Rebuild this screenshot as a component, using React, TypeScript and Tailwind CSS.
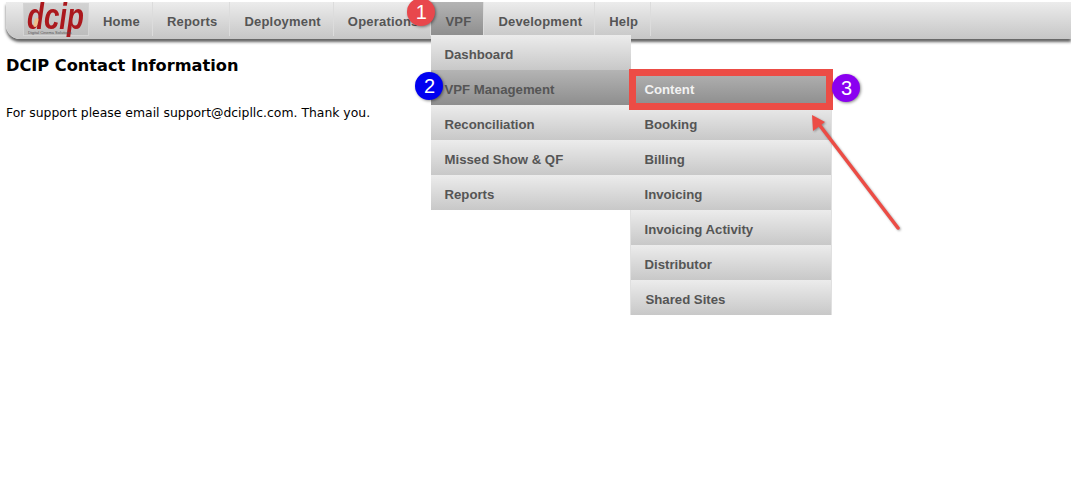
import React from 'react';

const navItems = ['Home', 'Reports', 'Deployment', 'Operations', 'VPF', 'Development', 'Help'];
const vpfMenu = ['Dashboard', 'VPF Management', 'Reconciliation', 'Missed Show & QF', 'Reports'];
const subMenu = ['Content', 'Booking', 'Billing', 'Invoicing', 'Invoicing Activity', 'Distributor', 'Shared Sites'];

const idle = 'bg-gradient-to-b from-[#ececec] to-[#c8c8c8] text-[#555]';
const hot = 'bg-gradient-to-b from-[#b4b4b4] to-[#8e8e8e]';

const Badge: React.FC<{ n: number; className: string }> = ({ n, className }) => (
  <div
    className={`absolute z-20 flex h-[28px] w-[28px] items-center justify-center rounded-full text-[20px] font-normal leading-none text-white shadow-[1px_1px_3px_rgba(0,0,0,0.45)] ${className}`}
  >
    {n}
  </div>
);

const SubMenu = () => (
  <div className="absolute left-full top-0 w-[200px] shadow-[1px_0_0_#e0e0e0,-1px_0_0_#e0e0e0]">
    {subMenu.map((label) => {
      const current = label === 'Content';
      return (
        <div
          key={label}
          className={`relative flex h-[35px] items-center pt-[5px] text-[13.2px] font-bold ${
            label === 'Shared Sites' ? 'pl-[14px]' : 'pl-[13px]'
          } ${current ? `${hot} text-[#f2f2f2]` : idle}`}
        >
          {label}
          {current && (
            <>
              <div className="absolute -bottom-[5px] -left-[2px] -right-[2px] -top-[1px] z-10 border-[7px] border-[#ec4c45]" />
              <Badge n={3} className="left-[201px] top-[4px] bg-[#8a00f0]" />
            </>
          )}
        </div>
      );
    })}
  </div>
);

const Dropdown = () => (
  <div className="absolute left-0 top-[33px] z-10 w-[200px] tracking-normal">
    {vpfMenu.map((label) => {
      const open = label === 'VPF Management';
      return (
        <div
          key={label}
          className={`relative flex h-[35px] items-center pl-[13px] pt-[5px] text-[13.2px] font-bold ${
            open ? `${hot} text-[#555]` : idle
          }`}
        >
          {label}
          {open && (
            <>
              <Badge n={2} className="-left-[16px] top-[2px] bg-[#0000f0]" />
              <SubMenu />
            </>
          )}
        </div>
      );
    })}
  </div>
);

const NavLink: React.FC<{ label: string }> = ({ label }) => {
  const active = label === 'VPF';
  return (
    <div
      className={`relative flex h-[34px] items-center border-r border-[#dcdcdc] pl-[14px] pr-[12px] pt-[6px] text-[13px] font-bold tracking-[0.2px] text-[#555] ${
        active ? hot : ''
      }`}
    >
      {label}
      {active && (
        <>
          <Badge n={1} className="-left-[24px] -top-[4px] bg-[#e8474c]" />
          <Dropdown />
        </>
      )}
    </div>
  );
};

export default function App() {
  return (
    <div className="relative h-[483px] w-full overflow-hidden bg-white font-['Liberation_Sans',Arial,sans-serif]">
      <div className="pt-[2px]">
        <nav className="ml-[6px] flex h-[37px] rounded-bl-[14px] bg-gradient-to-b from-[#ececec] to-[#c6c6c6] pl-[17px] shadow-[0_3px_3px_rgba(60,60,60,0.8)]">
          <div className="relative mt-[1px] h-[33px] w-[66px] border border-[#d4d4d4] bg-gradient-to-b from-[#d2d2d2] to-[#bdbdbd]">
            <span className="absolute left-[3px] top-[-7px] origin-left scale-x-[0.77] text-[36px] font-bold italic leading-[40px] text-[#ab181d]">
              dcip
            </span>
            <span className="absolute left-[10px] top-[14px] h-[9px] w-[4px] -skew-x-12 rounded-sm bg-[#eec08c]" />
            <span className="absolute bottom-0 left-[4px] whitespace-nowrap text-[4px] leading-[5px] text-[#555]">
              Digital Cinema Solutions
            </span>
          </div>
          {navItems.map((label) => (
            <NavLink key={label} label={label} />
          ))}
        </nav>
      </div>

      <main className="px-[6px] font-['DejaVu_Sans',Verdana,sans-serif] text-black">
        <h1 className="mt-[16px] text-[16.2px] font-bold leading-[22px]">DCIP Contact Information</h1>
        <p className="mt-[27px] text-[12.4px] leading-[18px]">For support please email support@dcipllc.com. Thank you.</p>
      </main>

      {/* callout arrow */}
      <svg className="absolute left-[800px] top-[105px] z-20 drop-shadow-[1px_1px_1px_rgba(0,0,0,0.35)]" width="110" height="130" viewBox="0 0 110 130">
        <path d="M98 123L18 18" stroke="#ec4c45" strokeWidth="3.5" strokeLinecap="round" />
        <path d="M12 10L25 17L13 26Z" fill="#ec4c45" />
      </svg>
    </div>
  );
}
